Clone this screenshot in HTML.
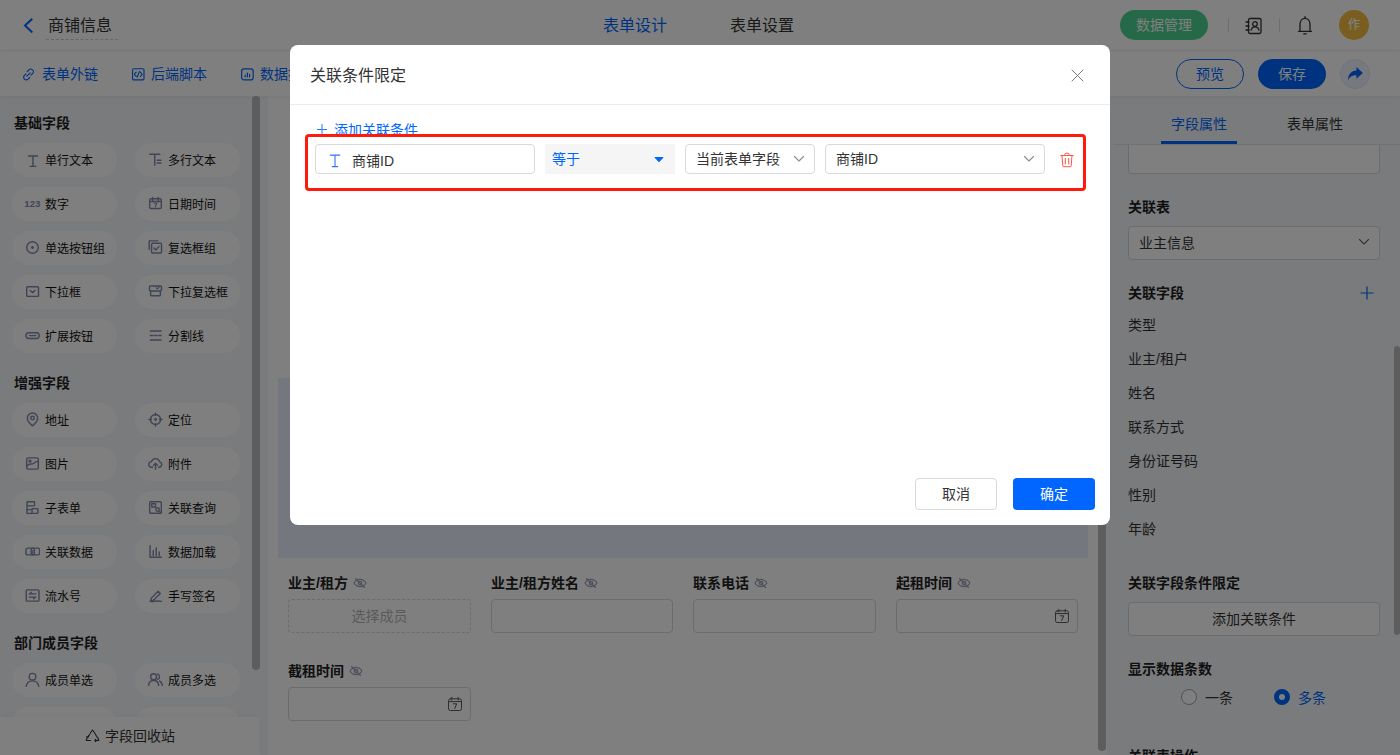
<!DOCTYPE html>
<html lang="zh-CN">
<head>
<meta charset="utf-8">
<title>商铺信息 - 表单设计</title>
<style>
*{box-sizing:border-box;margin:0;padding:0}
html,body{width:1400px;height:755px;overflow:hidden;background:#fff}
body{font-family:"Liberation Sans","Noto Sans CJK SC",sans-serif;font-size:14px;color:#333;position:relative}
.abs{position:absolute}
svg{display:block}
#hdr{position:absolute;left:0;top:0;width:1400px;height:51px;background:#fff;border-bottom:1px solid #f3f3f3}
#tbar{position:absolute;left:0;top:51px;width:1400px;height:45px;background:#fff;box-shadow:0 1px 4px rgba(0,0,0,.07);z-index:3}
.t{position:absolute;white-space:nowrap;line-height:1}
.blue{color:#0066ff}
#left{position:absolute;left:0;top:96px;width:268px;height:659px;background:#f5f7fa;z-index:2}
.sec{position:absolute;left:14px;font-weight:bold;font-size:14px;color:#1f1f1f;line-height:14px;white-space:nowrap}
.pill{position:absolute;width:105px;height:34px;border-radius:17px;background:#fff;font-size:12px;color:#111;line-height:36px;padding-left:33px;white-space:nowrap}
.pill svg{position:absolute;left:12.600px;top:8.700px}
.pill.r svg{left:13px;top:9px}
.flabel{position:absolute;font-size:14px;font-weight:bold;color:#222;line-height:14px;white-space:nowrap}
.flabel .eye{display:inline-block;margin-left:5px;vertical-align:-1px}
.fbox{position:absolute;width:183px;height:34px;border:1px solid #d9d9d9;border-radius:4px;background:#fff;font-size:14px}
.fbox .cal{position:absolute;right:7px;top:8px}
.rlabel{position:absolute;left:1128px;font-size:14px;font-weight:bold;color:#1f1f1f;line-height:14px;white-space:nowrap}
.ritem{position:absolute;left:1128px;font-size:14px;color:#333;line-height:14px;white-space:nowrap}
#mask{z-index:10;position:absolute;left:0;top:0;width:1400px;height:755px;background:rgba(0,0,0,.5)}
#modal{z-index:11;position:absolute;left:290px;top:45px;width:820px;height:480px;background:#fff;border-radius:8px}
.mbox{position:absolute;top:99px;height:30px;border:1px solid #d9d9d9;border-radius:4px;background:#fff;font-size:14px;line-height:30px;color:#333;padding-left:10px;white-space:nowrap}
.mbox .chev{position:absolute;right:9px;top:10px}
</style>
</head>
<body>
<div id="hdr">
  <svg class="abs" style="left:22px;top:17px" width="12" height="16" viewBox="0 0 12 16"><path d="M10.300 1.800 L3 8.600 L10.300 15.400" fill="none" stroke="#0066ff" stroke-width="2" stroke-linecap="butt" stroke-linejoin="miter"/></svg>
  <div class="t" style="left:48px;top:18px;font-size:16px;color:#333">商铺信息</div>
  <div class="abs" style="left:46px;top:39px;width:72px;border-top:1px dashed #cfcfcf"></div>
  <div class="t blue" style="left:603px;top:18px;font-size:16px">表单设计</div>
  <div class="t" style="left:730px;top:18px;font-size:16px;color:#333">表单设置</div>
  <div class="abs" style="left:1120px;top:10px;width:88px;height:30px;border-radius:15px;background:#4cd290;color:#fff;font-size:14px;line-height:30px;text-align:center">数据管理</div>
  <div class="abs" style="left:1228px;top:18px;width:1px;height:14px;background:#dcdcdc"></div>
  <svg class="abs" style="left:1245px;top:17px" width="18" height="18" viewBox="0 0 18 18" fill="none" stroke="#333" stroke-width="1.300" stroke-linecap="round"><rect x="3.500" y="1.500" width="12.500" height="15" rx="1.500"/><circle cx="10" cy="7" r="2.300"/><path d="M6 13.200c.6-2.400 2.200-3.400 4-3.400s3.400 1 4 3.400"/><path d="M1 5h3M1 9h3M1 13h3"/></svg>
  <div class="abs" style="left:1279px;top:18px;width:1px;height:14px;background:#dcdcdc"></div>
  <svg class="abs" style="left:1296px;top:15px" width="18" height="20" viewBox="0 0 18 20" fill="none" stroke="#333" stroke-width="1.300" stroke-linecap="round" stroke-linejoin="round"><path d="M9 1.700v1.500"/><path d="M4 16.200V9.500c0-3.500 2-6.200 5-6.200s5 2.700 5 6.200v6.700"/><path d="M2.500 16.300h13"/><path d="M7.800 18.900h2.400"/></svg>
  <div class="abs" style="left:1339px;top:10px;width:30px;height:30px;border-radius:15px;background:#f5bd3f;color:#fff;font-weight:500;font-size:12px;line-height:30px;text-align:center">作</div>
</div>
<div id="tbar">
  <svg class="abs" style="left:22px;top:17px" width="13" height="13" viewBox="0 0 13 13" fill="none" stroke="#0066ff" stroke-width="1.100" stroke-linecap="round"><path d="M5.300 3.500l1.600-1.600a2.600 2.600 0 0 1 3.700 3.700L9 7.200"/><path d="M7.700 9.500l-1.600 1.600a2.600 2.600 0 0 1-3.700-3.700L4 5.800"/><path d="M4.800 8.200l3.400-3.400"/></svg>
  <div class="t blue" style="left:42px;top:16px;font-size:14px">表单外链</div>
  <svg class="abs" style="left:132px;top:17px" width="13" height="13" viewBox="0 0 13 13" fill="none" stroke="#0066ff" stroke-width="1.100" stroke-linecap="round" stroke-linejoin="round"><rect x=".6" y=".7" width="11.400" height="11.200" rx="1.200"/><path d="M4.200 4.200L2.300 6.300l1.900 2.100M8.400 4.200l1.900 2.100-1.900 2.100M7.400 3.600L5.200 9"/></svg>
  <div class="t blue" style="left:151px;top:16px;font-size:14px">后端脚本</div>
  <svg class="abs" style="left:241px;top:17px" width="13" height="13" viewBox="0 0 13 13" fill="none" stroke="#0066ff" stroke-width="1.200" stroke-linecap="round"><rect x=".6" y=".9" width="11.600" height="11" rx="2.500"/><path d="M4.200 8.800V7.200M6.400 8.800V5M8.600 8.800V6.400"/></svg>
  <div class="t blue" style="left:260px;top:16px;font-size:14px">数据推送</div>
  <div class="abs" style="left:1176px;top:8px;width:68px;height:30px;border-radius:15px;border:1px solid #0066ff;color:#0066ff;font-size:14px;line-height:28px;text-align:center">预览</div>
  <div class="abs" style="left:1258px;top:8px;width:68px;height:30px;border-radius:15px;background:#0066ff;color:#fff;font-size:14px;line-height:30px;text-align:center">保存</div>
  <div class="abs" style="left:1340px;top:8px;width:30px;height:30px;border-radius:15px;background:#eef3ff;border:1px solid #dbe6ff"></div>
  <svg class="abs" style="left:1346px;top:14px" width="18" height="18" viewBox="0 0 16 16"><path d="M9.300 1.800L15 7l-5.700 5.200V9.200C5.600 9.100 3.200 10.600 1.700 13.500 1.900 8.500 4.600 5.200 9.300 4.900V1.800z" fill="#0066ff"/></svg>
</div>

<div id="left">
<div class="sec" style="top:20px">基础字段</div>
<div class="pill" style="left:12px;top:47px"><svg width="15" height="15" viewBox="0 0 16 16" fill="none" stroke="#8089a8" stroke-width="1.5" stroke-linecap="round" stroke-linejoin="round"><path d="M3.600 4.200h9.800M8.500 4.200v11.200M5.500 15.400h6"/></svg>单行文本</div>
<div class="pill r" style="left:135px;top:47px"><svg width="15" height="15" viewBox="0 0 16 16" fill="none" stroke="#8089a8" stroke-width="1.5" stroke-linecap="round" stroke-linejoin="round"><path d="M1.800 2.400h10.800M7.200 2.400v11.800M9.800 8.800h4M9.800 11.800h4"/></svg>多行文本</div>
<div class="pill" style="left:12px;top:91px"><span style="position:absolute;left:12.300px;top:-1.500px;font-size:9.600px;font-weight:bold;color:#8089a8">123</span>数字</div>
<div class="pill r" style="left:135px;top:91px"><svg width="15" height="15" viewBox="0 0 16 16" fill="none" stroke="#8089a8" stroke-width="1.5" stroke-linecap="round" stroke-linejoin="round"><rect x="1.800" y="3" width="12.400" height="10.400" rx="1.500"/><path d="M5 1.600v2.800M11 1.600v2.800M1.800 5.800h12.400"/><path d="M6.400 7.800h3l-1.700 3.600" stroke-width="1.100"/></svg>日期时间</div>
<div class="pill" style="left:12px;top:135px"><svg width="15" height="15" viewBox="0 0 16 16" fill="none" stroke="#8089a8" stroke-width="1.5" stroke-linecap="round" stroke-linejoin="round"><circle cx="8" cy="8" r="6.200"/><circle cx="8" cy="8" r="1.500" fill="#8089a8" stroke="none"/></svg>单选按钮组</div>
<div class="pill r" style="left:135px;top:135px"><svg width="15" height="15" viewBox="0 0 16 16" fill="none" stroke="#8089a8" stroke-width="1.5" stroke-linecap="round" stroke-linejoin="round"><path d="M1.300 10.200V.9H10.600"/><rect x="3.800" y="3.400" width="10.600" height="10.400" rx="1"/><path d="M6.300 8.600l2 2 3.500-3.800"/></svg>复选框组</div>
<div class="pill" style="left:12px;top:179px"><svg width="15" height="15" viewBox="0 0 16 16" fill="none" stroke="#8089a8" stroke-width="1.5" stroke-linecap="round" stroke-linejoin="round"><rect x="1.800" y="3" width="12.600" height="10.200" rx="1"/><path d="M5.600 7l2.500 2.200 2.500-2.200"/></svg>下拉框</div>
<div class="pill r" style="left:135px;top:179px"><svg width="15" height="15" viewBox="0 0 16 16" fill="none" stroke="#8089a8" stroke-width="1.5" stroke-linecap="round" stroke-linejoin="round"><rect x="1.600" y="2.200" width="12.800" height="5.200" rx="1"/><path d="M8.600 3.900l1.400 1.300 2.200-2.300" stroke-width="1.200"/><path d="M2.800 7.600v4a1 1 0 0 0 1 1h8.400a1 1 0 0 0 1-1v-4"/></svg>下拉复选框</div>
<div class="pill" style="left:12px;top:223px"><svg width="15" height="15" viewBox="0 0 16 16" fill="none" stroke="#8089a8" stroke-width="1.5" stroke-linecap="round" stroke-linejoin="round"><rect x="1" y="5" width="14.200" height="6.200" rx="3.100"/><path d="M4.600 8.100h7"/></svg>扩展按钮</div>
<div class="pill r" style="left:135px;top:223px"><svg width="15" height="15" viewBox="0 0 16 16" fill="none" stroke="#8089a8" stroke-width="1.5" stroke-linecap="round" stroke-linejoin="round"><path d="M2.500 3.200h11.500M2.500 8h2.600M6.900 8h2.700M11.400 8h2.600M2.500 12.800h11.500"/></svg>分割线</div>
<div class="sec" style="top:280px">增强字段</div>
<div class="pill" style="left:12px;top:307px"><svg width="15" height="15" viewBox="0 0 16 16" fill="none" stroke="#8089a8" stroke-width="1.5" stroke-linecap="round" stroke-linejoin="round"><path d="M8 14.800S2.500 10.500 2.500 6.500a5.500 5.500 0 0 1 11 0C13.500 10.500 8 14.800 8 14.800z"/><circle cx="8" cy="6.500" r="1.900"/></svg>地址</div>
<div class="pill r" style="left:135px;top:307px"><svg width="15" height="15" viewBox="0 0 16 16" fill="none" stroke="#8089a8" stroke-width="1.5" stroke-linecap="round" stroke-linejoin="round"><circle cx="8" cy="8" r="5.400"/><circle cx="8" cy="8" r="1.500" fill="#8089a8" stroke="none"/><path d="M8 1v2.600M8 12.400V15M1 8h2.600M12.400 8H15"/></svg>定位</div>
<div class="pill" style="left:12px;top:351px"><svg width="15" height="15" viewBox="0 0 16 16" fill="none" stroke="#8089a8" stroke-width="1.5" stroke-linecap="round" stroke-linejoin="round"><rect x="1.800" y="2" width="12.400" height="12" rx="1.500"/><circle cx="5.300" cy="5.500" r="1"/><path d="M2 10.500c3-3.500 5.200-1 7-2.600s3.200-2.200 5-2.200"/></svg>图片</div>
<div class="pill r" style="left:135px;top:351px"><svg width="15" height="15" viewBox="0 0 16 16" fill="none" stroke="#8089a8" stroke-width="1.5" stroke-linecap="round" stroke-linejoin="round"><path d="M4.800 12H4a3 3 0 0 1-.3-6A4.500 4.500 0 0 1 12.400 6.300 2.900 2.900 0 0 1 12 12h-.8"/><path d="M8 14.200V8M5.800 10l2.200-2.200 2.200 2.200"/></svg>附件</div>
<div class="pill" style="left:12px;top:395px"><svg width="15" height="15" viewBox="0 0 16 16" fill="none" stroke="#8089a8" stroke-width="1.5" stroke-linecap="round" stroke-linejoin="round"><rect x="2.200" y="1.800" width="8" height="4.500" rx=".8"/><path d="M2.200 6.300v8h5.300"/><rect x="7.500" y="9.200" width="6.300" height="5.100" rx=".8"/><path d="M2.200 10.300h5.300"/></svg>子表单</div>
<div class="pill r" style="left:135px;top:395px"><svg width="15" height="15" viewBox="0 0 16 16" fill="none" stroke="#8089a8" stroke-width="1.5" stroke-linecap="round" stroke-linejoin="round"><rect x="1.800" y="1.800" width="12.400" height="12.400" rx="1"/><rect x="4" y="4" width="4" height="3.500"/><circle cx="10.200" cy="10.200" r="1.900"/><path d="M11.700 11.700l1.700 1.700"/></svg>关联查询</div>
<div class="pill" style="left:12px;top:439px"><svg width="15" height="15" viewBox="0 0 16 16" fill="none" stroke="#8089a8" stroke-width="1.5" stroke-linecap="round" stroke-linejoin="round"><rect x="1" y="4.400" width="9" height="7.200" rx="2"/><rect x="6.600" y="4.400" width="9" height="7.200" rx="2"/><path d="M8.300 7v3" stroke-width="1.200"/></svg>关联数据</div>
<div class="pill r" style="left:135px;top:439px"><svg width="15" height="15" viewBox="0 0 16 16" fill="none" stroke="#8089a8" stroke-width="1.5" stroke-linecap="round" stroke-linejoin="round"><path d="M2.200 1.800v12.400h12"/><path d="M5.600 12.500V7M8.800 12.500V4M12 12.500V8.500"/></svg>数据加载</div>
<div class="pill" style="left:12px;top:483px"><svg width="15" height="15" viewBox="0 0 16 16" fill="none" stroke="#8089a8" stroke-width="1.5" stroke-linecap="round" stroke-linejoin="round"><rect x="1.300" y="2" width="13.600" height="12" rx="1"/><path d="M4.500 6.300h7M4.500 9.700h7M6.800 4.600L5 6.300M9.200 11.400L11 9.700"/></svg>流水号</div>
<div class="pill r" style="left:135px;top:483px"><svg width="15" height="15" viewBox="0 0 16 16" fill="none" stroke="#8089a8" stroke-width="1.5" stroke-linecap="round" stroke-linejoin="round"><path d="M3.500 10.800l7.300-7.300 2.300 2.300-7.300 7.300-2.900.6z"/><path d="M2.300 14.200c3.400.9 6.900-1.100 12 0"/></svg>手写签名</div>
<div class="sec" style="top:540px">部门成员字段</div>
<div class="pill" style="left:12px;top:567px"><svg width="15" height="15" viewBox="0 0 16 16" fill="none" stroke="#8089a8" stroke-width="1.5" stroke-linecap="round" stroke-linejoin="round"><circle cx="8" cy="5" r="3.500"/><path d="M1.300 15.300c.6-3.900 3.200-5.800 6.700-5.800s6.100 1.900 6.700 5.800"/></svg>成员单选</div>
<div class="pill r" style="left:135px;top:567px"><svg width="15" height="15" viewBox="0 0 16 16" fill="none" stroke="#8089a8" stroke-width="1.5" stroke-linecap="round" stroke-linejoin="round"><circle cx="6" cy="5" r="3.200"/><path d="M.6 14.300c.4-3.400 2.600-5.200 5.400-5.200s5 1.800 5.400 5.200"/><path d="M10.200 2a3.200 3.200 0 0 1 0 6M12.400 9.600c1.600.8 2.600 2.400 2.900 4.700"/></svg>成员多选</div>
<div class="pill" style="left:12px;top:611px"><svg width="15" height="15" viewBox="0 0 16 16" fill="none" stroke="#8089a8" stroke-width="1.5" stroke-linecap="round" stroke-linejoin="round"><rect x="5.700" y="1.800" width="4.600" height="3.400"/><rect x="1.800" y="10.800" width="4.600" height="3.400"/><rect x="9.600" y="10.800" width="4.600" height="3.400"/><path d="M8 5.200V8M4.100 10.800V8h7.800v2.800"/></svg>部门单选</div>
<div class="pill r" style="left:135px;top:611px"><svg width="15" height="15" viewBox="0 0 16 16" fill="none" stroke="#8089a8" stroke-width="1.5" stroke-linecap="round" stroke-linejoin="round"><rect x="5.700" y="1.800" width="4.600" height="3.400"/><rect x="1.800" y="10.800" width="4.600" height="3.400"/><rect x="9.600" y="10.800" width="4.600" height="3.400"/><path d="M8 5.200V8M4.100 10.800V8h7.800v2.800"/></svg>部门多选</div>
<div class="abs" style="left:252px;top:0;width:8px;height:574px;border-radius:4px;background:#bababa"></div>
<div class="abs" style="left:0;top:621px;width:260px;height:38px;background:#fff;box-shadow:0 -2px 6px rgba(0,0,0,.04)">
  <svg class="abs" style="left:85px;top:12px" width="15" height="14" viewBox="0 0 15 14" fill="none" stroke="#333" stroke-width="1.100" stroke-linecap="round" stroke-linejoin="round"><path d="M5.500 3.800L7.500 1l2 2.800M9.500 3.800l2.700 4.400M3 8.200l2-3.400"/><path d="M12.800 8.500l1 3h-4M10.800 10.300l-1 1.200 1 1.200"/><path d="M2.200 8.500l-1 3h4.300"/><path d="M1.500 7.800l1.600.3.300-1.600"/></svg>
  <div class="t" style="left:105px;top:12px;font-size:14px;color:#333">字段回收站</div>
</div>
</div>
<div id="center">
  <div class="abs" style="left:260px;top:96px;width:847px;height:659px;background:#fff"></div>
  <div class="abs" style="left:278px;top:378px;width:810px;height:180px;background:#e8effc"></div>
  <div class="flabel" style="left:288px;top:576px">业主/租方<svg class="eye" width="14" height="12" viewBox="0 0 14 12" fill="none" stroke="#9aa0b4" stroke-width="1.150" stroke-linecap="round"><path d="M1 6c1.500-2.400 3.600-3.600 6-3.600S11.500 3.600 13 6c-1.500 2.400-3.600 3.600-6 3.600S2.500 8.400 1 6z"/><circle cx="7" cy="6" r="1.800"/><path d="M2.500 1.500l9 9"/></svg></div>
  <div class="fbox" style="left:288px;top:599px;border-style:dashed;text-align:center;color:#b5b5b5;line-height:32px">选择成员</div>
  <div class="flabel" style="left:491px;top:576px">业主/租方姓名<svg class="eye" width="14" height="12" viewBox="0 0 14 12" fill="none" stroke="#9aa0b4" stroke-width="1.150" stroke-linecap="round"><path d="M1 6c1.500-2.400 3.600-3.600 6-3.600S11.500 3.600 13 6c-1.500 2.400-3.600 3.600-6 3.600S2.500 8.400 1 6z"/><circle cx="7" cy="6" r="1.800"/><path d="M2.500 1.500l9 9"/></svg></div>
  <div class="fbox" style="left:491px;top:599px;width:182px"></div>
  <div class="flabel" style="left:693px;top:576px">联系电话<svg class="eye" width="14" height="12" viewBox="0 0 14 12" fill="none" stroke="#9aa0b4" stroke-width="1.150" stroke-linecap="round"><path d="M1 6c1.500-2.400 3.600-3.600 6-3.600S11.500 3.600 13 6c-1.500 2.400-3.600 3.600-6 3.600S2.500 8.400 1 6z"/><circle cx="7" cy="6" r="1.800"/><path d="M2.500 1.500l9 9"/></svg></div>
  <div class="fbox" style="left:693px;top:599px"></div>
  <div class="flabel" style="left:896px;top:576px">起租时间<svg class="eye" width="14" height="12" viewBox="0 0 14 12" fill="none" stroke="#9aa0b4" stroke-width="1.150" stroke-linecap="round"><path d="M1 6c1.500-2.400 3.600-3.600 6-3.600S11.500 3.600 13 6c-1.500 2.400-3.600 3.600-6 3.600S2.500 8.400 1 6z"/><circle cx="7" cy="6" r="1.800"/><path d="M2.500 1.500l9 9"/></svg></div>
  <div class="fbox" style="left:896px;top:599px;width:182px"><svg class="cal" width="16" height="16" viewBox="0 0 16 16" fill="none" stroke="#5c5c62" stroke-width="1" stroke-linecap="round" stroke-linejoin="round"><rect x="1.500" y="2.800" width="13" height="11.700" rx="1.800"/><path d="M4.800 1.300v2.800M11.200 1.300v2.800M1.500 5.600h13"/><path d="M6.300 7.800h3.400l-2 4.700" stroke-width="1"/></svg></div>
  <div class="flabel" style="left:288px;top:664px">截租时间<svg class="eye" width="14" height="12" viewBox="0 0 14 12" fill="none" stroke="#9aa0b4" stroke-width="1.150" stroke-linecap="round"><path d="M1 6c1.500-2.400 3.600-3.600 6-3.600S11.500 3.600 13 6c-1.500 2.400-3.600 3.600-6 3.600S2.500 8.400 1 6z"/><circle cx="7" cy="6" r="1.800"/><path d="M2.500 1.500l9 9"/></svg></div>
  <div class="fbox" style="left:288px;top:687px"><svg class="cal" width="16" height="16" viewBox="0 0 16 16" fill="none" stroke="#5c5c62" stroke-width="1" stroke-linecap="round" stroke-linejoin="round"><rect x="1.500" y="2.800" width="13" height="11.700" rx="1.800"/><path d="M4.800 1.300v2.800M11.200 1.300v2.800M1.500 5.600h13"/><path d="M6.300 7.800h3.400l-2 4.700" stroke-width="1"/></svg></div>
  <div class="abs" style="left:1098px;top:300px;width:8px;height:451px;border-radius:4px;background:#bababa"></div>
</div>
<div id="right">
  <div class="abs" style="left:1107px;top:96px;width:293px;height:659px;background:#f5f7fa"></div>
  <div class="t blue" style="left:1171px;top:117px;font-size:14px">字段属性</div>
  <div class="t" style="left:1287px;top:117px;font-size:14px;color:#333">表单属性</div>
  <div class="abs" style="left:1114px;top:144px;width:286px;height:1px;background:#e4e4e4"></div>
  <div class="abs" style="left:1161px;top:141px;width:76px;height:3px;background:#0066ff"></div>
  <div class="abs" style="left:1128px;top:145px;width:252px;height:29px;border:1px solid #d9d9d9;border-top:none;border-radius:0 0 4px 4px;background:#fff"></div>
  <div class="rlabel" style="top:200px">关联表</div>
  <div class="abs" style="left:1128px;top:226px;width:252px;height:34px;border:1px solid #d9d9d9;border-radius:4px;background:#fff;line-height:32px;padding-left:10px;color:#333">业主信息</div>
  <svg class="abs" style="left:1358px;top:238px" width="12" height="8" viewBox="0 0 12 8" fill="none" stroke="#666" stroke-width="1.100" stroke-linecap="round" stroke-linejoin="round"><path d="M1.500 1.500L6 6l4.500-4.500"/></svg>
  <div class="rlabel" style="top:286px">关联字段</div>
  <svg class="abs" style="left:1360px;top:286px" width="14" height="14" viewBox="0 0 14 14" stroke="#0066ff" stroke-width="1.200"><path d="M7 .5v13M.5 7h13"/></svg>
  <div class="ritem" style="top:318px">类型</div>
  <div class="ritem" style="top:352px">业主/租户</div>
  <div class="ritem" style="top:386px">姓名</div>
  <div class="ritem" style="top:420px">联系方式</div>
  <div class="ritem" style="top:454px">身份证号码</div>
  <div class="ritem" style="top:488px">性别</div>
  <div class="ritem" style="top:522px">年龄</div>
  <div class="rlabel" style="top:576px">关联字段条件限定</div>
  <div class="abs" style="left:1128px;top:602px;width:252px;height:34px;border:1px solid #d9d9d9;border-radius:4px;background:#fff;line-height:32px;text-align:center;color:#333">添加关联条件</div>
  <div class="rlabel" style="top:662px">显示数据条数</div>
  <div class="abs" style="left:1181px;top:689px;width:16px;height:16px;border-radius:8px;border:1px solid #a2a2b6;background:#fff"></div>
  <div class="t" style="left:1205px;top:691px;font-size:14px;color:#333">一条</div>
  <div class="abs" style="left:1274px;top:689px;width:16px;height:16px;border-radius:8px;border:5px solid #0066ff;background:#fff"></div>
  <div class="t blue" style="left:1298px;top:691px;font-size:14px">多条</div>
  <div class="rlabel" style="top:749px">关联表操作</div>
  <div class="abs" style="left:1394px;top:346px;width:6px;height:289px;border-radius:3px;background:#bababa"></div>
</div>
<div id="mask"></div>
<div id="modal">
  <div class="t" style="left:20px;top:23px;font-size:16px;color:#333">关联条件限定</div>
  <svg class="abs" style="left:781px;top:24px" width="13" height="13" viewBox="0 0 13 13" stroke="#7a7a7a" stroke-width="1" stroke-linecap="round"><path d="M1 1l11 11M12 1L1 12"/></svg>
  <div class="abs" style="left:0;top:59px;width:820px;height:1px;background:#ebebeb"></div>
  <svg class="abs" style="left:27px;top:79px" width="10" height="10" viewBox="0 0 10 10" stroke="#2f74ff" stroke-width="1"><path d="M5 0v10M0 5.500h10"/></svg>
  <div class="t" style="left:44px;top:78px;font-size:14px;color:#0066ff">添加关联条件</div>
  <div class="abs" style="left:15px;top:89px;width:781px;height:57px;border:3px solid #ff1a0e;border-radius:4px;background:#fff"></div>
  <div class="mbox" style="left:25px;width:220px;padding-left:37px"><span style="position:relative;left:-1px;top:1px">商铺ID</span>
    <svg class="abs" style="left:13px;top:9px" width="12" height="14" viewBox="0 0 12 14" fill="none" stroke="#3370ff" stroke-width="1.100" stroke-linecap="round"><path d="M1.200 1.100h9.600M6 1.100v11.400M3.300 12.600h5.400"/></svg>
  </div>
  <div class="mbox" style="left:255px;width:130px;border:none;background:#f5f5f5;color:#0066ff;padding-left:7px;border-radius:0">等于
    <svg class="abs" style="left:108px;top:12px" width="12" height="7" viewBox="0 0 12 7"><path d="M2 1.500h8L6 5.800z" fill="#0066ff" stroke="#0066ff" stroke-width="1" stroke-linejoin="round"/></svg>
  </div>
  <div class="mbox" style="left:395px;width:130px;line-height:28px">当前表单字段<svg class="chev" width="12" height="8" viewBox="0 0 12 8" fill="none" stroke="#8c8c8c" stroke-width="1.100" stroke-linecap="round" stroke-linejoin="round"><path d="M1.500 1.500L6 6l4.500-4.500"/></svg></div>
  <div class="mbox" style="left:535px;width:220px;line-height:28px">商铺ID<svg class="chev" width="12" height="8" viewBox="0 0 12 8" fill="none" stroke="#8c8c8c" stroke-width="1.100" stroke-linecap="round" stroke-linejoin="round"><path d="M1.500 1.500L6 6l4.500-4.500"/></svg></div>
  <svg class="abs" style="left:770px;top:107px" width="14" height="16" viewBox="0 0 14 16" fill="none" stroke="#ff5240" stroke-width="1" stroke-linecap="round" stroke-linejoin="round"><path d="M.8 3.500h12.400M4.800 3.500V2.600a1.400 1.400 0 0 1 1.400-1.400h1.600a1.400 1.400 0 0 1 1.400 1.400v.9"/><path d="M2 3.500l.8 10.300a1 1 0 0 0 1 .9h6.400a1 1 0 0 0 1-.9L12 3.500"/><path d="M5.300 6.500v5.500M8.700 6.500v5.500"/></svg>
  <div class="abs" style="left:625px;top:433px;width:82px;height:32px;border:1px solid #d9d9d9;border-radius:4px;font-size:14px;line-height:30px;text-align:center;color:#333">取消</div>
  <div class="abs" style="left:723px;top:433px;width:82px;height:32px;border-radius:4px;background:#0066ff;font-size:14px;line-height:32px;text-align:center;color:#fff">确定</div>
</div>
</body>
</html>
